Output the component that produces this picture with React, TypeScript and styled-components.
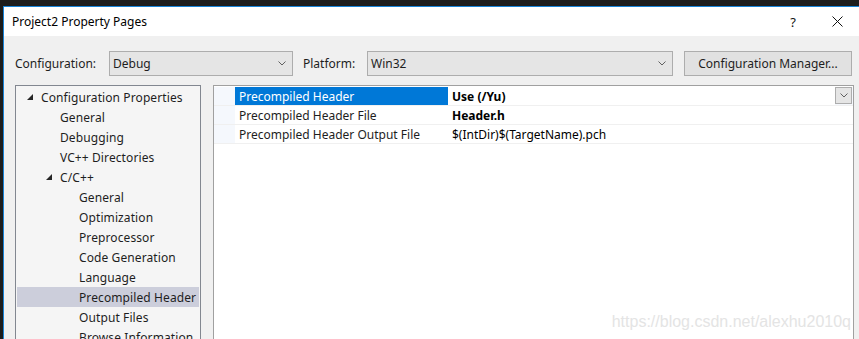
import React from "react";
import styled, { createGlobalStyle } from "styled-components";

const Global = createGlobalStyle`
  html, body { margin: 0; padding: 0; background: #1c1c1c; overflow: hidden; }
  body { font-family: "Noto Sans", "Segoe UI", sans-serif; font-size: 12px; color: #1e1e1e; }
`;

const Screen = styled.div`
  width: 859px;
  height: 339px;
  padding: 6px 0 0 3px;
  box-sizing: border-box;
  overflow: hidden;
`;

const Window = styled.div`
  height: 333px;
  border-top: 1px solid #1883d7;
  border-left: 1px solid #1883d7;
  box-sizing: border-box;
  display: flex;
  flex-direction: column;
  background: #f0f0f0;
  overflow: hidden;
`;

const TitleBar = styled.div`
  height: 29px;
  flex: none;
  background: #ffffff;
  display: flex;
  align-items: center;
  padding-left: 8px;
`;

const Title = styled.div`
  flex: 1;
  font-size: 12px;
  color: #000;
`;

const TitleButton = styled.div`
  width: 44px;
  height: 29px;
  display: flex;
  align-items: center;
  justify-content: center;
  font-size: 13px;
  color: #111;
`;

const Body = styled.div`
  flex: 1;
  display: flex;
  flex-direction: column;
  padding: 15px 5px 0 11px;
  gap: 9px;
  min-height: 0;
`;

const Toolbar = styled.div`
  display: flex;
  align-items: center;
  height: 25px;
`;

const Label = styled.span<{ $w: number }>`
  width: ${(p) => p.$w}px;
  flex: none;
  color: #1e1e1e;
`;

const Combo = styled.div<{ $w: number; $mr: number }>`
  width: ${(p) => p.$w}px;
  margin-right: ${(p) => p.$mr}px;
  height: 25px;
  box-sizing: border-box;
  border: 1px solid #adadad;
  background: #e5e5e5;
  display: flex;
  align-items: center;
  padding: 0 6px 0 3px;
  flex: none;
  span { flex: 1; }
`;

const Button = styled.div`
  width: 168px;
  height: 25px;
  box-sizing: border-box;
  border: 1px solid #adadad;
  background: #e1e1e1;
  display: flex;
  align-items: center;
  justify-content: center;
  flex: none;
`;

const Panels = styled.div`
  flex: 1;
  display: flex;
  gap: 12px;
  min-height: 0;
`;

const Tree = styled.div`
  width: 186px;
  flex: none;
  box-sizing: border-box;
  border: 1px solid #828790;
  border-bottom: none;
  background: #f5f5f5;
  padding: 1px;
  overflow: hidden;
`;

const TreeItem = styled.div<{ $level: number; $selected?: boolean }>`
  height: 20px;
  display: flex;
  align-items: center;
  padding-left: ${(p) => 5 + p.$level * 19}px;
  background: ${(p) => (p.$selected ? "#cccedb" : "transparent")};
  white-space: nowrap;
  letter-spacing: 0.1px;
`;

const Expander = styled.span`
  width: 19px;
  flex: none;
  display: flex;
  align-items: center;
  padding-left: 5px;
  box-sizing: border-box;
`;

const Grid = styled.div`
  width: 641px;
  flex: none;
  box-sizing: border-box;
  border: 1px solid #a0a0a0;
  border-bottom: none;
  background: #ffffff;
  padding-top: 1px;
  position: relative;
  overflow: hidden;
`;

const Row = styled.div`
  height: 19px;
  display: flex;
  border-bottom: 1px solid #f0f0f0;
  box-sizing: border-box;
  background: #f5f8fd;
`;

const NameCell = styled.div<{ $selected?: boolean }>`
  margin-left: 21px;
  width: 213px;
  flex: none;
  display: flex;
  align-items: center;
  padding-left: 4px;
  box-sizing: border-box;
  background: ${(p) => (p.$selected ? "#0078d7" : "#ffffff")};
  color: ${(p) => (p.$selected ? "#ffffff" : "#1e1e1e")};
`;

const ValueCell = styled.div<{ $bold?: boolean }>`
  flex: 1;
  display: flex;
  align-items: center;
  padding-left: 4px;
  background: #ffffff;
  font-weight: ${(p) => (p.$bold ? 700 : 400)};
  color: #000;
`;

const DropButton = styled.div`
  width: 17px;
  height: 17px;
  box-sizing: border-box;
  border: 1px solid #adadad;
  background: #e5e5e5;
  display: flex;
  align-items: center;
  justify-content: center;
  margin-right: 1px;
  align-self: flex-start;
`;

const Watermark = styled.div`
  position: absolute;
  right: 2px;
  bottom: 8px;
  font-family: "Liberation Sans", Arial, sans-serif;
  font-size: 16px;
  color: #e4e4e4;
`;

const Chevron = () => (
  <svg width="8" height="5" viewBox="0 0 8 5">
    <polyline points="0.5,0.5 4,4 7.5,0.5" fill="none" stroke="#606060" strokeWidth="1" />
  </svg>
);

const Triangle = () => (
  <svg width="6" height="6" viewBox="0 0 6 6">
    <polygon points="6,0 6,6 0,6" fill="#262626" />
  </svg>
);

const Close = () => (
  <svg width="11" height="11" viewBox="0 0 11 11">
    <path d="M0.5 0.5 L10.5 10.5 M10.5 0.5 L0.5 10.5" stroke="#111" strokeWidth="1" />
  </svg>
);

const tree: { label: string; level: number; expander?: boolean; selected?: boolean }[] = [
  { label: "Configuration Properties", level: 0, expander: true },
  { label: "General", level: 1 },
  { label: "Debugging", level: 1 },
  { label: "VC++ Directories", level: 1 },
  { label: "C/C++", level: 1, expander: true },
  { label: "General", level: 2 },
  { label: "Optimization", level: 2 },
  { label: "Preprocessor", level: 2 },
  { label: "Code Generation", level: 2 },
  { label: "Language", level: 2 },
  { label: "Precompiled Header", level: 2, selected: true },
  { label: "Output Files", level: 2 },
  { label: "Browse Information", level: 2 },
];

export default function App() {
  return (
    <>
      <Global />
      <Screen>
        <Window>
          <TitleBar>
            <Title>Project2 Property Pages</Title>
            <TitleButton>?</TitleButton>
            <TitleButton>
              <Close />
            </TitleButton>
          </TitleBar>
          <Body>
            <Toolbar>
              <Label $w={94}>Configuration:</Label>
              <Combo $w={184} $mr={10}>
                <span>Debug</span>
                <Chevron />
              </Combo>
              <Label $w={64}>Platform:</Label>
              <Combo $w={306} $mr={11}>
                <span>Win32</span>
                <Chevron />
              </Combo>
              <Button>Configuration Manager...</Button>
            </Toolbar>
            <Panels>
              <Tree>
                {tree.map((t, i) => (
                  <TreeItem key={i} $level={t.level} $selected={t.selected}>
                    <Expander>{t.expander ? <Triangle /> : null}</Expander>
                    {t.label}
                  </TreeItem>
                ))}
              </Tree>
              <Grid>
                <Row>
                  <NameCell $selected>Precompiled Header</NameCell>
                  <ValueCell $bold>Use (/Yu)</ValueCell>
                  <DropButton>
                    <Chevron />
                  </DropButton>
                </Row>
                <Row>
                  <NameCell>Precompiled Header File</NameCell>
                  <ValueCell $bold>Header.h</ValueCell>
                </Row>
                <Row>
                  <NameCell>Precompiled Header Output File</NameCell>
                  <ValueCell>$(IntDir)$(TargetName).pch</ValueCell>
                </Row>
                <Watermark>https://blog.csdn.net/alexhu2010q</Watermark>
              </Grid>
            </Panels>
          </Body>
        </Window>
      </Screen>
    </>
  );
}
